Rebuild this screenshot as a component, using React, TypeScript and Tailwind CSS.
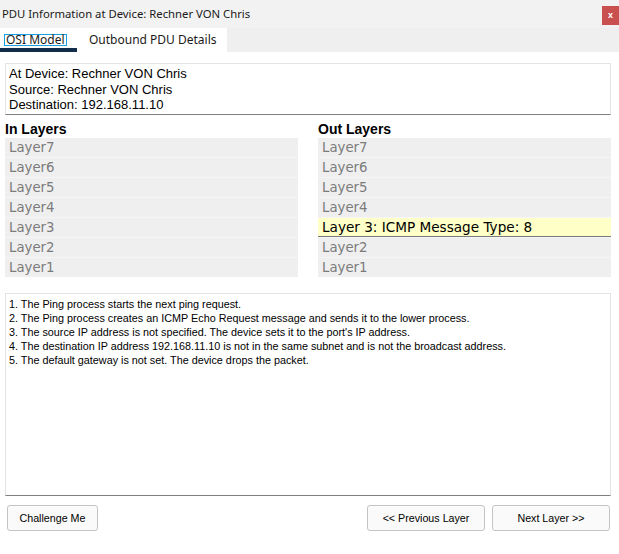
import React from "react";

const layers = ["Layer7", "Layer6", "Layer5", "Layer4", "Layer3", "Layer2", "Layer1"];

function LayerList({ title, highlight }: { title: string; highlight?: { index: number; text: string } }) {
  return (
    <div className="flex flex-col w-[293px]">
      <div className="h-[16px] text-[14px] leading-[16px] font-bold text-black" style={{ fontFamily: '"Liberation Sans", Arial, sans-serif' }}>
        {title}
      </div>
      <div className="flex flex-col gap-[1px] mt-[1px] bg-[#f6f6f6]">
        {layers.map((l, i) =>
          highlight && highlight.index === i ? (
            <div
              key={l}
              className="h-[19px] bg-[#ffffc8] border-b border-[#7a7a7a] pl-[4px] text-[13.6px] leading-[18px] text-black"
              style={{ fontFamily: '"DejaVu Sans", Verdana, sans-serif' }}
            >
              {highlight.text}
            </div>
          ) : (
            <div
              key={l}
              className="h-[19px] bg-[#efefef] pl-[4px] text-[13.3px] leading-[19px] text-[#7b7b7b]"
              style={{ fontFamily: '"DejaVu Sans", Verdana, sans-serif' }}
            >
              {l}
            </div>
          )
        )}
      </div>
    </div>
  );
}

export default function App() {
  const arial = { fontFamily: '"Liberation Sans", Arial, sans-serif' };
  return (
    <div className="w-[619px] h-[554px] bg-white flex flex-col overflow-hidden">
      {/* Title bar */}
      <div className="h-[28px] bg-[#f2f2f2] flex items-start justify-between">
        <div className="pl-[2px] pt-[6px] text-[11.3px] leading-[16px] text-[#1a1a1a]" style={{ fontFamily: '"Noto Sans", "Open Sans", sans-serif' }}>
          PDU Information at Device: Rechner VON Chris
        </div>
        <div className="mt-[6px] w-[17px] h-[19px] bg-[#c9504f] flex items-center justify-center text-white text-[9px] font-bold leading-none" style={arial}>
          x
        </div>
      </div>
      {/* Tabs */}
      <div className="h-[24px] bg-[#efefef] flex">
        <div className="w-[77px] bg-white flex flex-col">
          <div className="flex-1 flex items-start pl-[4px] pt-[6px]">
            <span className="border border-[#1aa0e0] px-[1px] text-[12px] leading-[10px] h-[12px] text-[#1a1a1a]" style={{ fontFamily: '"Noto Sans", "Open Sans", sans-serif' }}>
              OSI Model
            </span>
          </div>
          <div className="h-[4px] bg-[#132c4c]" />
        </div>
        <div className="w-[150px] bg-white pl-[12px] pt-[4px] text-[12px] leading-[16px] text-[#1a1a1a]" style={{ fontFamily: '"Noto Sans", "Open Sans", sans-serif' }}>
          Outbound PDU Details
        </div>
      </div>
      {/* Content */}
      <div className="flex flex-col pl-[5px] pr-[8px] pt-[11px]">
        <div className="h-[52px] border border-[#e3e3e3] border-b-[#7f7f7f] pl-[3px] pt-[2px] text-[13px] leading-[15.5px] text-black" style={arial}>
          <div>At Device: Rechner VON Chris</div>
          <div>Source: Rechner VON Chris</div>
          <div>Destination: 192.168.11.10</div>
        </div>
        <div className="flex justify-between mt-[6px]">
          <LayerList title="In Layers" />
          <LayerList title="Out Layers" highlight={{ index: 4, text: "Layer 3: ICMP Message Type: 8" }} />
        </div>
        <div className="mt-[16px] h-[203px] border border-[#e3e3e3] border-b-[#7f7f7f] pl-[3px] pt-[3px] text-[10.8px] leading-[14px] text-black" style={arial}>
          <div>1. The Ping process starts the next ping request.</div>
          <div>2. The Ping process creates an ICMP Echo Request message and sends it to the lower process.</div>
          <div>3. The source IP address is not specified. The device sets it to the port's IP address.</div>
          <div>4. The destination IP address 192.168.11.10 is not in the same subnet and is not the broadcast address.</div>
          <div>5. The default gateway is not set. The device drops the packet.</div>
        </div>
        <div className="flex justify-between mt-[9px] pl-[2px]">
          <button className="w-[91px] h-[26px] rounded-[3px] border border-[#c4c4c4] bg-[#fafafa] text-[10.7px] text-black" style={arial}>
            Challenge Me
          </button>
          <div className="flex gap-[7px] pr-[1px]">
            <button className="w-[118px] h-[26px] rounded-[3px] border border-[#c4c4c4] bg-[#fafafa] text-[10.7px] text-black" style={arial}>
              &lt;&lt; Previous Layer
            </button>
            <button className="w-[118px] h-[26px] rounded-[3px] border border-[#c4c4c4] bg-[#fafafa] text-[10.7px] text-black" style={arial}>
              Next Layer &gt;&gt;
            </button>
          </div>
        </div>
      </div>
    </div>
  );
}
